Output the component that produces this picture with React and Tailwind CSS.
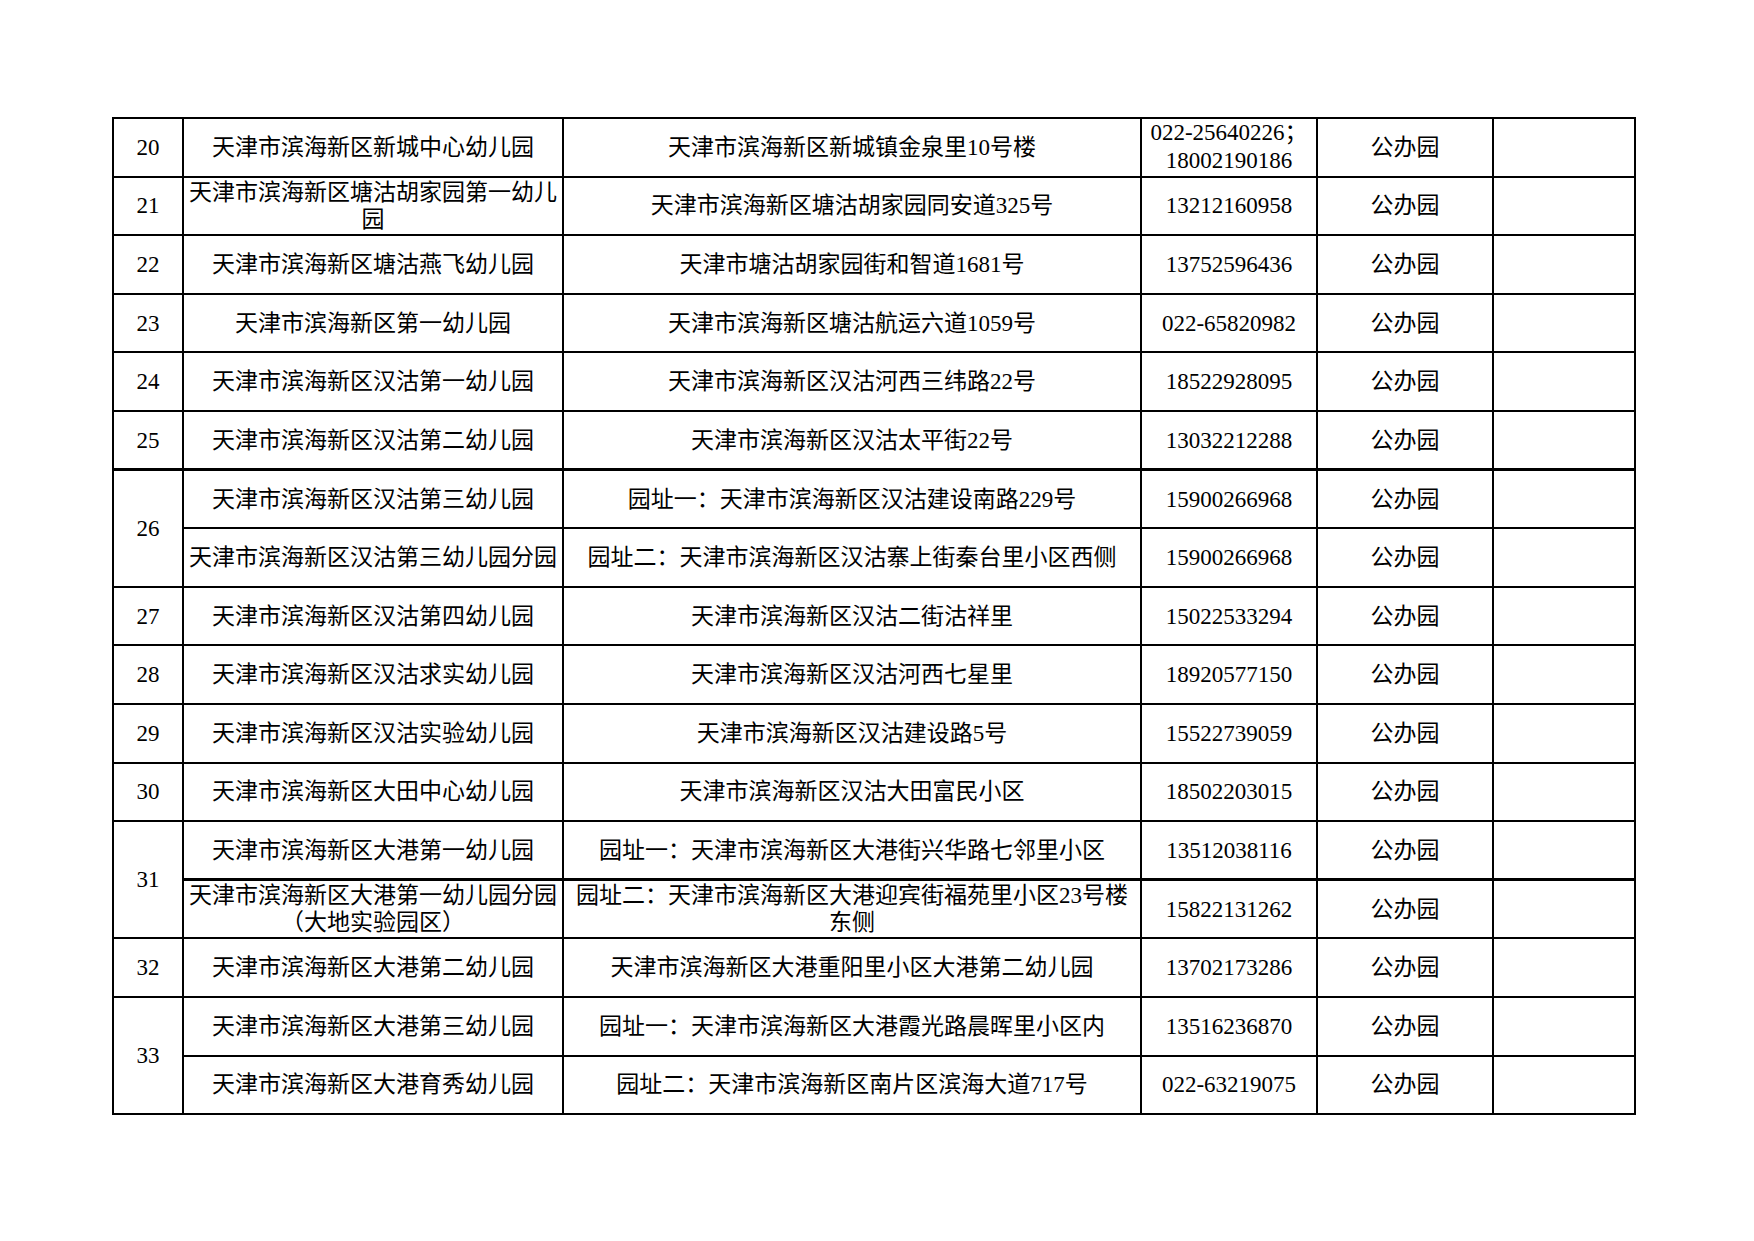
import React from 'react';

const rows = [
    {no: '20', items: [{name: '天津市滨海新区新城中心幼儿园', addr: '天津市滨海新区新城镇金泉里10号楼', phone: ['022-25640226；', '18002190186']}]},
    {no: '21', items: [{name: ['天津市滨海新区塘沽胡家园第一幼儿', '园'], addr: '天津市滨海新区塘沽胡家园同安道325号', phone: '13212160958'}]},
    {no: '22', items: [{name: '天津市滨海新区塘沽燕飞幼儿园', addr: '天津市塘沽胡家园街和智道1681号', phone: '13752596436'}]},
    {no: '23', items: [{name: '天津市滨海新区第一幼儿园', addr: '天津市滨海新区塘沽航运六道1059号', phone: '022-65820982'}]},
    {no: '24', items: [{name: '天津市滨海新区汉沽第一幼儿园', addr: '天津市滨海新区汉沽河西三纬路22号', phone: '18522928095'}]},
    {no: '25', items: [{name: '天津市滨海新区汉沽第二幼儿园', addr: '天津市滨海新区汉沽太平街22号', phone: '13032212288'}]},
    {no: '26', thick: true, items: [
        {name: '天津市滨海新区汉沽第三幼儿园', addr: '园址一：天津市滨海新区汉沽建设南路229号', phone: '15900266968'},
        {name: '天津市滨海新区汉沽第三幼儿园分园', addr: '园址二：天津市滨海新区汉沽寨上街秦台里小区西侧', phone: '15900266968'},
    ]},
    {no: '27', items: [{name: '天津市滨海新区汉沽第四幼儿园', addr: '天津市滨海新区汉沽二街沽祥里', phone: '15022533294'}]},
    {no: '28', items: [{name: '天津市滨海新区汉沽求实幼儿园', addr: '天津市滨海新区汉沽河西七星里', phone: '18920577150'}]},
    {no: '29', items: [{name: '天津市滨海新区汉沽实验幼儿园', addr: '天津市滨海新区汉沽建设路5号', phone: '15522739059'}]},
    {no: '30', items: [{name: '天津市滨海新区大田中心幼儿园', addr: '天津市滨海新区汉沽大田富民小区', phone: '18502203015'}]},
    {no: '31', items: [
        {name: '天津市滨海新区大港第一幼儿园', addr: '园址一：天津市滨海新区大港街兴华路七邻里小区', phone: '13512038116'},
        {name: ['天津市滨海新区大港第一幼儿园分园', '（大地实验园区）'], addr: ['园址二：天津市滨海新区大港迎宾街福苑里小区23号楼', '东侧'], phone: '15822131262', thick: true},
    ]},
    {no: '32', items: [{name: '天津市滨海新区大港第二幼儿园', addr: '天津市滨海新区大港重阳里小区大港第二幼儿园', phone: '13702173286'}]},
    {no: '33', items: [
        {name: '天津市滨海新区大港第三幼儿园', addr: '园址一：天津市滨海新区大港霞光路晨晖里小区内', phone: '13516236870'},
        {name: '天津市滨海新区大港育秀幼儿园', addr: '园址二：天津市滨海新区南片区滨海大道717号', phone: '022-63219075'},
    ]},
];

const Lines = ({value, loose}) =>
    Array.isArray(value)
        ? value.map((line, i) =>
            <div key={i} className={loose ? "whitespace-nowrap leading-[28px]" : "whitespace-nowrap"}>{line}</div>)
        : <div className="whitespace-nowrap">{value}</div>;

export default function App() {
    const cell = "border-2 border-black text-center align-middle px-[2px] py-0 h-[58.6px]";

    return (
        <div className="w-[1754px] h-[1241px] bg-white pt-[117px] pl-[112px] text-black text-[23px] leading-[27px]"
             style={{fontFamily: '"Liberation Serif", "Noto Sans CJK SC", serif'}}>
            <table className="table-fixed border-collapse w-[1522px]">
                <colgroup>
                    <col className="w-[70px]"/>
                    <col className="w-[380px]"/>
                    <col className="w-[578px]"/>
                    <col className="w-[176px]"/>
                    <col className="w-[176px]"/>
                    <col className="w-[142px]"/>
                </colgroup>
                <tbody>
                {rows.map(row => row.items.map((it, i) => {
                    const top = (row.thick && i === 0) || it.thick ? ' border-t-[3px]' : '';
                    return (
                        <tr key={row.no + '-' + i}>
                            {i === 0 &&
                                <td rowSpan={row.items.length} className={cell + top}>{row.no}</td>}
                            <td className={cell + top}><Lines value={it.name}/></td>
                            <td className={cell + top}><Lines value={it.addr}/></td>
                            <td className={cell + top}><Lines value={it.phone} loose/></td>
                            <td className={cell + top}>公办园</td>
                            <td className={cell + top}></td>
                        </tr>
                    );
                }))}
                </tbody>
            </table>
        </div>
    );
}
